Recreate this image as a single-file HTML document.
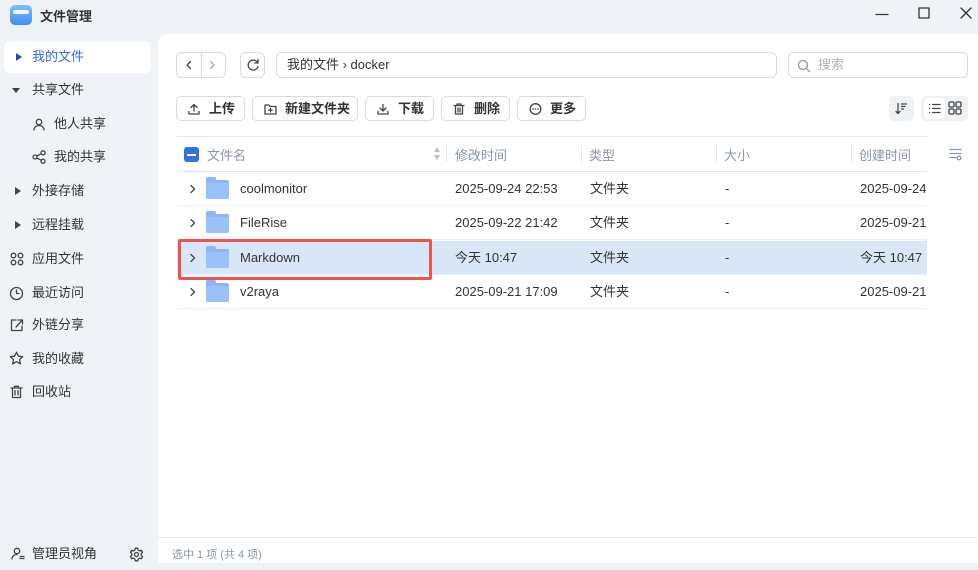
<!DOCTYPE html><html><head><meta charset="utf-8"><style>
*{box-sizing:border-box;margin:0;padding:0}
body{width:978px;height:563px;overflow:hidden;background:#eff2f7;font-family:"Liberation Sans","Noto Sans CJK SC",sans-serif;position:relative;color:#333}
.a{position:absolute}
.side{font-size:13px;color:#333}
.side>div{position:absolute;left:0;width:151px;height:32px;line-height:32px}
.side span{position:absolute}
.side svg{position:absolute}
.main{position:absolute;left:158px;top:34px;right:0;bottom:0;background:#fff;border-top-left-radius:10px}
.btn{position:absolute;top:96px;height:25px;border:1px solid #d4dbe5;border-radius:5px;font-size:13px;font-weight:bold;line-height:23px;color:#333;background:#fff;padding-left:32px}
.btn svg{left:11px;top:6px}
.hd{font-size:13px;color:#8a97a8}
.row{position:absolute;left:177px;width:750px;height:34px;border-bottom:1px solid #eceff3;font-size:13px;line-height:34px}
.row span{position:absolute}
.fold{position:absolute;left:29px;top:8px;width:23px;height:19px;background:#8fb5f7;border-radius:2px}
.fold:before{content:"";position:absolute;left:0;top:-3px;width:10px;height:5px;background:#8fb5f7;border-radius:2px 2px 0 0}
.fold:after{content:"";position:absolute;left:0;top:3px;width:23px;height:16px;background:#9cc0fa;border-radius:2px}
svg{position:absolute;fill:none;stroke:#444;stroke-width:1.3;stroke-linecap:round;stroke-linejoin:round}
.tri{position:absolute;width:0;height:0}
</style></head><body>
<div class="a" style="left:10px;top:5px;width:22px;height:20px;border-radius:5px;background:linear-gradient(#7cc0ff,#3d8ff0)"><div style="position:absolute;left:3px;top:5px;width:16px;height:4px;background:#fff;border-radius:2px;opacity:.9"></div></div>
<div class="a" style="left:40px;top:6px;font-size:13px;font-weight:bold">文件管理</div>
<svg style="left:875px;top:8px" width="14" height="14"><path d="M1 6.5H13" stroke="#333"/></svg>
<svg style="left:918px;top:7px" width="12" height="12"><rect x="1" y="1" width="10" height="10" stroke="#333"/></svg>
<svg style="left:960px;top:7px" width="12" height="12"><path d="M1 1L11 11M11 1L1 11" stroke="#333"/></svg>
<div class="side">
<div style="top:41px;left:4px;width:147px;background:#fff;border-radius:6px;color:#2f6fdc"><div class="tri" style="left:12px;top:12px;border-left:6px solid #1e4ea8;border-top:4px solid transparent;border-bottom:4px solid transparent"></div><span style="left:28px">我的文件</span></div>
<div style="top:74px"><div class="tri" style="left:12px;top:14px;border-top:5px solid #444;border-left:4px solid transparent;border-right:4px solid transparent"></div><span style="left:32px">共享文件</span></div>
<div style="top:108px"><svg style="left:33px;top:10px" width="13" height="13"><circle cx="6" cy="4" r="2.7"/><path d="M1 12c0-3 2.5-4.5 5-4.5s5 1.5 5 4.5"/></svg><span style="left:54px">他人共享</span></div>
<div style="top:141px"><svg style="left:32px;top:9px" width="14" height="14"><circle cx="3" cy="7" r="2"/><circle cx="11" cy="2.8" r="2"/><circle cx="11" cy="11.2" r="2"/><path d="M4.8 6L9.2 3.8M4.8 8L9.2 10.2"/></svg><span style="left:54px">我的共享</span></div>
<div style="top:175px"><div class="tri" style="left:15px;top:12px;border-left:6px solid #444;border-top:4px solid transparent;border-bottom:4px solid transparent"></div><span style="left:32px">外接存储</span></div>
<div style="top:209px"><div class="tri" style="left:15px;top:12px;border-left:6px solid #444;border-top:4px solid transparent;border-bottom:4px solid transparent"></div><span style="left:32px">远程挂载</span></div>
<div style="top:243px"><svg style="left:10px;top:9px" width="14" height="14"><circle cx="3.5" cy="3.5" r="2.3"/><circle cx="10.5" cy="3.5" r="2.3"/><circle cx="3.5" cy="10.5" r="2.3"/><circle cx="10.5" cy="10.5" r="2.3"/></svg><span style="left:32px">应用文件</span></div>
<div style="top:277px"><svg style="left:9px;top:9px" width="15" height="15"><circle cx="7.5" cy="7.5" r="6"/><path d="M7.5 4V7.5H10"/></svg><span style="left:32px">最近访问</span></div>
<div style="top:309px"><svg style="left:10px;top:9px" width="14" height="14"><path d="M6 2H1.5V12.5H12V8M6 9L12 2.5M8 2H12.5V6"/></svg><span style="left:32px">外链分享</span></div>
<div style="top:343px"><svg style="left:9px;top:8px" width="15" height="15"><path d="M7.5 1.2l1.9 4 4.3.5-3.2 2.9.9 4.3-3.9-2.2-3.9 2.2.9-4.3L1.3 5.7l4.3-.5z"/></svg><span style="left:32px">我的收藏</span></div>
<div style="top:376px"><svg style="left:10px;top:9px" width="13" height="14"><path d="M1 3H12M4.5 3V1.3H8.5V3M2.5 3V12.5H10.5V3M5 5.5V10M8 5.5V10"/></svg><span style="left:32px">回收站</span></div>
<div style="top:538px"><svg style="left:11px;top:9px" width="14" height="13"><circle cx="6" cy="4" r="2.7"/><path d="M1 12c0-3 2.5-4.5 5-4.5M9 9.5h4M9 11.5h4"/></svg><span style="left:32px">管理员视角</span><svg style="left:129px;top:9px" width="15" height="15"><circle cx="7.5" cy="7.5" r="2"/><path d="M6.3 1.2h2.4l.4 1.8 1.5.9 1.8-.6 1.2 2.1-1.4 1.2v1.8l1.4 1.2-1.2 2.1-1.8-.6-1.5.9-.4 1.8H6.3l-.4-1.8-1.5-.9-1.8.6-1.2-2.1 1.4-1.2V6.6L1.4 5.4l1.2-2.1 1.8.6 1.5-.9z"/></svg></div>
</div>
<div class="main"></div>
<div class="a" style="left:158px;top:537px;right:0;height:1px;background:#e5e8ed"></div>
<div class="a" style="left:172px;top:546px;font-size:11px;color:#8a97a8">选中 1 项 (共 4 项)</div>
<div class="a" style="left:176px;top:52px;width:50px;height:26px;border:1px solid #d4dbe5;border-radius:6px"><div style="position:absolute;left:24px;top:0;width:1px;height:24px;background:#d4dbe5"></div>
<svg style="left:8px;top:7px" width="8" height="10"><path d="M5.5 1.5L2 5l3.5 3.5"/></svg><svg style="left:31px;top:7px" width="8" height="10"><path d="M2.5 1.5L6 5 2.5 8.5" stroke="#aaa"/></svg></div>
<div class="a" style="left:240px;top:52px;width:25px;height:26px;border:1px solid #d4dbe5;border-radius:6px"><svg style="left:5px;top:5px" width="14" height="14"><path d="M11.5 4.5A5 5 0 1 0 12 8.5M12 1.5V5H8.5"/></svg></div>
<div class="a" style="left:276px;top:52px;width:501px;height:26px;border:1px solid #d4dbe5;border-radius:6px;font-size:13px;line-height:24px;padding-left:10px">我的文件 › docker</div>
<div class="a" style="left:788px;top:52px;width:180px;height:26px;border:1px solid #d4dbe5;border-radius:6px;font-size:13px;line-height:24px;padding-left:29px;color:#aab4c2">搜索<svg style="left:8px;top:6px" width="14" height="14"><circle cx="6" cy="6" r="4.5" stroke="#8a97a8"/><path d="M9.5 9.5L12.5 12.5" stroke="#8a97a8"/></svg></div>
<div class="btn" style="left:176px;width:69px"><svg width="12" height="12"><path d="M6 8V1.5M3 4.5L6 1.5 9 4.5M1 8.5V11H11V8.5"/></svg>上传</div>
<div class="btn" style="left:252px;width:106px"><svg width="13" height="12"><path d="M1 2H5L6 3.5H12V11H1zM6.5 5.5V9M4.8 7.2H8.2"/></svg>新建文件夹</div>
<div class="btn" style="left:365px;width:69px"><svg width="12" height="12"><path d="M6 1.5V8M3 5L6 8 9 5M1 8.5V11H11V8.5"/></svg>下载</div>
<div class="btn" style="left:441px;width:69px"><svg width="12" height="12"><path d="M1 2.5H11M4 2.5V1H8V2.5M2.5 2.5V11H9.5V2.5M5 5V9M7 5V9"/></svg>删除</div>
<div class="btn" style="left:517px;width:69px"><svg width="13" height="13"><circle cx="6.5" cy="6" r="5.3"/><path d="M4 6h.1M6.5 6h.1M9 6h.1" stroke-width="1.6"/></svg>更多</div>
<div class="a" style="left:889px;top:96px;width:25px;height:25px;background:#eff2f5;border-radius:5px"><svg style="left:6px;top:6px" width="13" height="13"><path d="M3 1.5V11.5M1 9.5L3 11.5 5 9.5M6.5 2H11.5M6.5 4.5H10M6.5 7H8.5"/></svg></div>
<div class="a" style="left:921px;top:96px;width:47px;height:25px;background:#eff2f5;border-radius:5px"><div style="position:absolute;left:3px;top:2px;width:21px;height:21px;background:#fff;border-radius:4px"><svg style="left:4px;top:4px" width="13" height="13"><path d="M1.5 2.5h.1M1.5 6.5h.1M1.5 10.5h.1M4.5 2.5H12M4.5 6.5H12M4.5 10.5H12"/></svg></div><svg style="left:27px;top:5px" width="14" height="14"><rect x="1" y="1" width="5" height="5" rx="1.2"/><rect x="8" y="1" width="5" height="5" rx="1.2"/><rect x="1" y="8" width="5" height="5" rx="1.2"/><rect x="8" y="8" width="5" height="5" rx="1.2"/></svg></div>
<div class="a" style="left:177px;top:136px;width:750px;height:1px;background:#e3e7ec"></div>
<div class="a" style="left:177px;top:171px;width:750px;height:1px;background:#e3e7ec"></div>
<div class="a" style="left:184px;top:147px;width:15px;height:15px;background:#2f73e0;border-radius:3px"><div style="position:absolute;left:3px;top:6.5px;width:9px;height:2px;background:#fff"></div></div>
<div class="a hd" style="left:207px;top:145px">文件名</div>
<div class="a" style="left:434px;top:147px;border-bottom:5px solid #b8c0cc;border-left:3.5px solid transparent;border-right:3.5px solid transparent"></div>
<div class="a" style="left:434px;top:155px;border-top:5px solid #b8c0cc;border-left:3.5px solid transparent;border-right:3.5px solid transparent"></div>
<div class="a" style="left:446px;top:145px;width:1px;height:17px;background:#e3e7ec"></div>
<div class="a hd" style="left:455px;top:145px">修改时间</div>
<div class="a" style="left:581px;top:145px;width:1px;height:17px;background:#e3e7ec"></div>
<div class="a hd" style="left:589px;top:145px">类型</div>
<div class="a" style="left:716px;top:145px;width:1px;height:17px;background:#e3e7ec"></div>
<div class="a hd" style="left:724px;top:145px">大小</div>
<div class="a" style="left:851px;top:145px;width:1px;height:17px;background:#e3e7ec"></div>
<div class="a hd" style="left:859px;top:145px">创建时间</div>
<svg style="left:949px;top:148px" width="14" height="13"><path d="M1 1.5H12M1 5.5H12M1 9.5H7" stroke="#8a97a8"/><circle cx="10" cy="10" r="1.8" stroke="#8a97a8"/></svg>
<div class="row" style="top:172px"><svg style="left:12px;top:12px" width="8" height="10"><path d="M2 1.5L5.5 5 2 8.5"/></svg><div class="fold"></div><span style="left:63px">coolmonitor</span><span style="left:278px">2025-09-24 22:53</span><span style="left:413px">文件夹</span><span style="left:548px">-</span><span style="left:683px">2025-09-24</span></div>
<div class="row" style="top:206px"><svg style="left:12px;top:12px" width="8" height="10"><path d="M2 1.5L5.5 5 2 8.5"/></svg><div class="fold"></div><span style="left:63px">FileRise</span><span style="left:278px">2025-09-22 21:42</span><span style="left:413px">文件夹</span><span style="left:548px">-</span><span style="left:683px">2025-09-21</span></div>
<div class="row" style="top:241px;background:#d9e6f8"><svg style="left:12px;top:12px" width="8" height="10"><path d="M2 1.5L5.5 5 2 8.5"/></svg><div class="fold"></div><span style="left:63px">Markdown</span><span style="left:278px">今天 10:47</span><span style="left:413px">文件夹</span><span style="left:548px">-</span><span style="left:683px">今天 10:47</span></div>
<div class="row" style="top:275px"><svg style="left:12px;top:12px" width="8" height="10"><path d="M2 1.5L5.5 5 2 8.5"/></svg><div class="fold"></div><span style="left:63px">v2raya</span><span style="left:278px">2025-09-21 17:09</span><span style="left:413px">文件夹</span><span style="left:548px">-</span><span style="left:683px">2025-09-21</span></div>
<div class="a" style="left:178px;top:239px;width:254px;height:41px;border:3px solid #ef5350;border-radius:2px"></div>
</body></html>
